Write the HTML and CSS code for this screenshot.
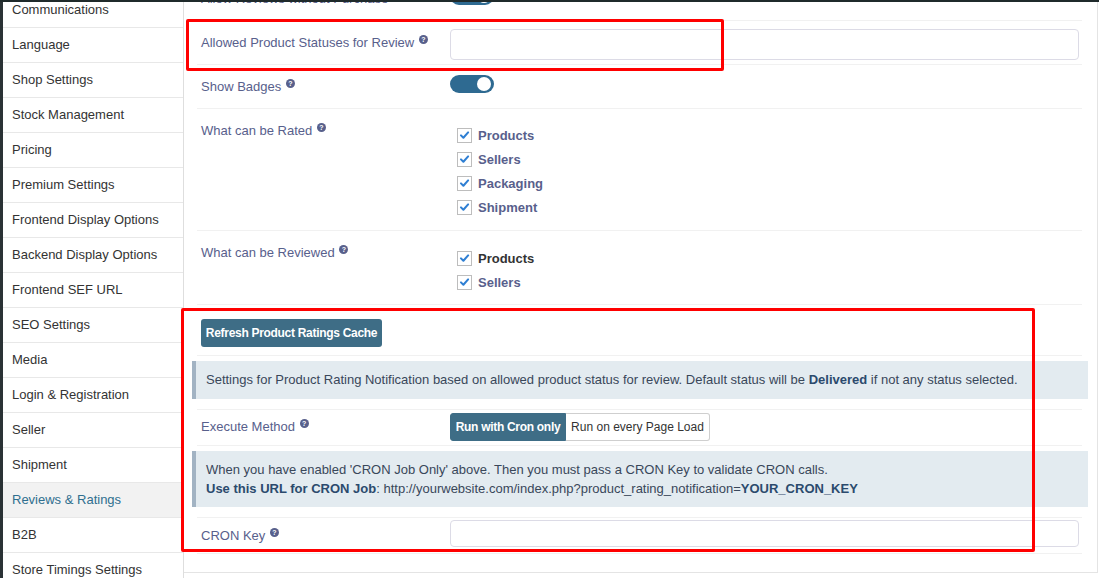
FILE: index.html
```html
<!DOCTYPE html>
<html>
<head>
<meta charset="utf-8">
<link rel="stylesheet" href="styles.css">
</head>
<body>
<div class="topbar"></div>
<div class="app">
  <div class="rail"></div>
  <nav class="sidebar">
    <div class="nav-item">Communications</div>
    <div class="nav-item">Language</div>
    <div class="nav-item">Shop Settings</div>
    <div class="nav-item">Stock Management</div>
    <div class="nav-item">Pricing</div>
    <div class="nav-item">Premium Settings</div>
    <div class="nav-item">Frontend Display Options</div>
    <div class="nav-item">Backend Display Options</div>
    <div class="nav-item">Frontend SEF URL</div>
    <div class="nav-item">SEO Settings</div>
    <div class="nav-item">Media</div>
    <div class="nav-item">Login &amp; Registration</div>
    <div class="nav-item">Seller</div>
    <div class="nav-item">Shipment</div>
    <div class="nav-item active">Reviews &amp; Ratings</div>
    <div class="nav-item">B2B</div>
    <div class="nav-item">Store Timings Settings</div>
  </nav>
  <main class="main">
    <div class="inner">
      <div class="row first">
        <div class="lbl">Allow Reviews without Purchase <i class="help">?</i></div>
        <div class="val"><span class="toggle tg-top"></span></div>
      </div>
      <div class="row">
        <div class="lbl">Allowed Product Statuses for Review <i class="help">?</i></div>
        <div class="val"><input class="text" type="text"></div>
      </div>
      <div class="row">
        <div class="lbl">Show Badges <i class="help">?</i></div>
        <div class="val"><span class="toggle"></span></div>
      </div>
      <div class="row">
        <div class="lbl">What can be Rated <i class="help">?</i></div>
        <div class="val checks">
          <label class="chk"><span class="box"><svg viewBox="0 0 14 14" width="14" height="14"><path d="M3.2 7.4 L5.8 10 L10.9 4.2" fill="none" stroke="#2f7fd3" stroke-width="2.2" stroke-linecap="round" stroke-linejoin="round"/></svg></span>Products</label>
          <label class="chk"><span class="box"><svg viewBox="0 0 14 14" width="14" height="14"><path d="M3.2 7.4 L5.8 10 L10.9 4.2" fill="none" stroke="#2f7fd3" stroke-width="2.2" stroke-linecap="round" stroke-linejoin="round"/></svg></span>Sellers</label>
          <label class="chk"><span class="box"><svg viewBox="0 0 14 14" width="14" height="14"><path d="M3.2 7.4 L5.8 10 L10.9 4.2" fill="none" stroke="#2f7fd3" stroke-width="2.2" stroke-linecap="round" stroke-linejoin="round"/></svg></span>Packaging</label>
          <label class="chk"><span class="box"><svg viewBox="0 0 14 14" width="14" height="14"><path d="M3.2 7.4 L5.8 10 L10.9 4.2" fill="none" stroke="#2f7fd3" stroke-width="2.2" stroke-linecap="round" stroke-linejoin="round"/></svg></span>Shipment</label>
        </div>
      </div>
      <div class="row">
        <div class="lbl">What can be Reviewed <i class="help">?</i></div>
        <div class="val checks checks-b">
          <label class="chk dark"><span class="box"><svg viewBox="0 0 14 14" width="14" height="14"><path d="M3.2 7.4 L5.8 10 L10.9 4.2" fill="none" stroke="#2f7fd3" stroke-width="2.2" stroke-linecap="round" stroke-linejoin="round"/></svg></span>Products</label>
          <label class="chk"><span class="box"><svg viewBox="0 0 14 14" width="14" height="14"><path d="M3.2 7.4 L5.8 10 L10.9 4.2" fill="none" stroke="#2f7fd3" stroke-width="2.2" stroke-linecap="round" stroke-linejoin="round"/></svg></span>Sellers</label>
        </div>
      </div>
      <div class="row btn-row">
        <button class="btn">Refresh Product Ratings Cache</button>
      </div>
      <div class="info-wrap">
        <div class="info">Settings for Product Rating Notification based on allowed product status for review. Default status will be <b>Delivered</b> if not any status selected.</div>
      </div>
      <div class="row compact">
        <div class="lbl">Execute Method <i class="help">?</i></div>
        <div class="val">
          <div class="btn-group">
            <span class="seg on">Run with Cron only</span><span class="seg">Run on every Page Load</span>
          </div>
        </div>
      </div>
      <div class="info-wrap">
        <div class="info two">When you have enabled 'CRON Job Only' above. Then you must pass a CRON Key to validate CRON calls.<br><b>Use this URL for CRON Job</b>: http://yourwebsite.com/index.php?product_rating_notification=<b>YOUR_CRON_KEY</b></div>
      </div>
      <div class="row compact last">
        <div class="lbl cron">CRON Key <i class="help">?</i></div>
        <div class="val"><input class="text small" type="text"></div>
      </div>
    </div>
  </main>
</div>
<div class="mark mark-one"></div>
<div class="mark mark-two"></div>
</body>
</html>
```

FILE: styles.css
```css
* { box-sizing: border-box; }
html, body { margin: 0; padding: 0; }
body {
  background: #fff;
  font-family: "Liberation Sans", Arial, Helvetica, sans-serif;
  font-size: 13px;
  color: #333;
  width: 1099px;
  height: 578px;
  overflow: hidden;
  position: relative;
}
.topbar { height: 2px; background: #1f2a2b; }
.app { display: flex; height: 576px; overflow: hidden; }
.rail { width: 3px; background: #2a3235; flex: none; }
.sidebar {
  width: 181px;
  flex: none;
  border-right: 1px solid #dedede;
  margin-top: -9px;
  background: #fff;
}
.nav-item {
  height: 35px;
  line-height: 34px;
  padding-left: 9px;
  border-bottom: 1px solid #e8e8e8;
  color: #333;
  white-space: nowrap;
}
.nav-item.active { background: #f2f2f2; color: #2f6f8f; }

.main {
  width: 914px;
  flex: none;
  height: 571px;
  border-right: 1px solid #e4e4e4;
  border-bottom: 1px solid #e4e4e4;
  overflow: hidden;
}
.inner { margin-top: -26px; }
.row {
  display: flex;
  margin: 0 15px 0 13px;
  border-top: 1px solid #f1f1f1;
}
.lbl {
  width: 253px;
  flex: none;
  padding: 13px 0 12px 4px;
  line-height: 18px;
  color: #58608c;
  white-space: nowrap;
}
.help {
  display: inline-block;
  width: 9px;
  height: 9px;
  border-radius: 50%;
  background: #58608c;
  color: #fff;
  font-style: normal;
  font-weight: bold;
  font-size: 7px;
  line-height: 9px;
  text-align: center;
  vertical-align: 5px;
  margin-left: 1px;
}
.val { flex: 1; }
.text {
  display: block;
  width: 629px;
  height: 31px;
  margin: 8px 0 4px;
  border: 1px solid #dcdbe6;
  border-radius: 4px;
  background: #fff;
  outline: none;
}
.text.small { height: 27px; margin: 2px 0 0; }
.toggle {
  display: block;
  position: relative;
  width: 44px;
  height: 18px;
  margin-top: 10px;
  border-radius: 9px;
  background: #2e6a91;
}
.toggle::after {
  content: "";
  position: absolute;
  right: 3px;
  top: 2px;
  width: 14px;
  height: 14px;
  border-radius: 50%;
  background: #fff;
}
.tg-top { margin-top: 10px; }
.checks { padding: 14px 0 11px 7px; }
.checks.checks-b { padding: 15px 0 10px 7px; }
.chk {
  display: flex;
  align-items: center;
  height: 24px;
  font-weight: bold;
  color: #58608c;
}
.chk.dark { color: #333; }
.box {
  width: 15px;
  height: 15px;
  border: 1px solid #bdbdbd;
  background: #fff;
  margin-right: 6px;
  display: flex;
  align-items: center;
  justify-content: center;
}
.box svg { display: block; }
.btn-row { padding: 14px 0 8px 4px; align-items: flex-start; }
.btn {
  display: block;
  height: 28px;
  padding: 0;
  margin: 0;
  border: none;
  border-radius: 3px;
  background: #3e6d86;
  color: #fff;
  font-family: inherit;
  font-size: 12px;
  font-weight: bold;
  width: 181px;
  white-space: nowrap;
  letter-spacing: -0.3px;
}
.info-wrap {
  margin: 0 15px 0 13px;
  border-top: 1px solid #f1f1f1;
  padding: 5px 0 10px;
}
.info {
  margin: 0 -6px 0 -5px;
  background: #e3ebf0;
  border-left: 4px solid #a2b3c3;
  padding: 9px 10px 10px 10px;
  line-height: 19px;
  color: #39475a;
  white-space: nowrap;
}
.info b { color: #2b4a6d; }
.info.two { padding-bottom: 9px; }
.compact .lbl { padding: 8px 0 9px 4px; }
.compact .lbl.cron { padding: 9px 0 8px 4px; }
.row.last { border-bottom: 1px solid #f1f1f1; }
.btn-group {
  display: inline-flex;
  margin-top: 3px;
  height: 28px;
  font-size: 12px;
}
.seg {
  display: flex;
  align-items: center;
  justify-content: center;
  width: 144px;
  border: 1px solid #cfcfcf;
  border-left: none;
  border-radius: 0 3px 3px 0;
  color: #333;
  background: #fff;
  white-space: nowrap;
}
.seg.on {
  width: 116px;
  background: #3e6d86;
  color: #fff;
  font-weight: bold;
  letter-spacing: -0.3px;
  border: 1px solid #3e6d86;
  border-radius: 3px 0 0 3px;
}
.mark {
  position: absolute;
  border: 3px solid #ff0000;
  border-radius: 2px;
}
.mark-one { left: 186px; top: 19px; width: 538px; height: 52px; }
.mark-two { left: 181px; top: 308px; width: 854px; height: 244px; }
```
